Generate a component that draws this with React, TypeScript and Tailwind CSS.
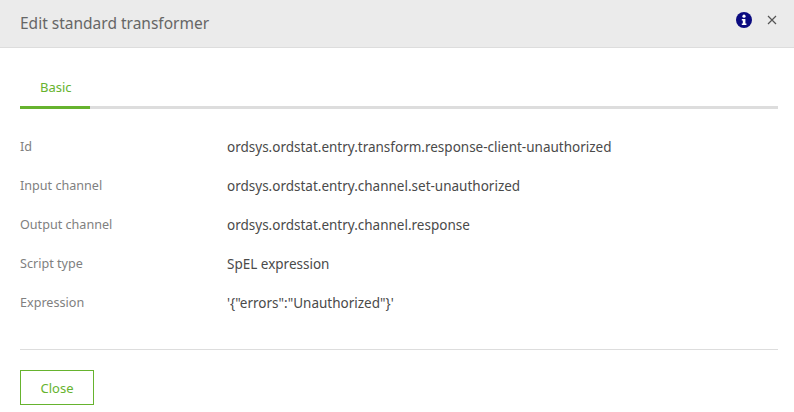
import React from 'react';

const rows = [
  ['Id', 'ordsys.ordstat.entry.transform.response-client-unauthorized'],
  ['Input channel', 'ordsys.ordstat.entry.channel.set-unauthorized'],
  ['Output channel', 'ordsys.ordstat.entry.channel.response'],
  ['Script type', 'SpEL expression'],
  ['Expression', '\'{"errors":"Unauthorized"}\''],
];

export default function App() {
  return (
    <div className="w-[794px] h-[412px] overflow-hidden bg-white font-['Noto_Sans',sans-serif] text-[13px]">
      <div className="flex h-[48px] items-center justify-between border-b border-[#dddddd] bg-[#ebebeb] pl-5 pr-[17px]">
        <h1 className="text-[15.5px] text-[#666666]">Edit standard transformer</h1>
        <div className="mb-[8px] flex items-center gap-[15px]">
          <svg width="16" height="16" viewBox="0 0 16 16">
            <circle cx="8" cy="8" r="8" fill="#0b0b80" />
            <circle cx="8" cy="4.2" r="1.6" fill="#fff" />
            <path d="M5.8 7h3.6v4.4h1v1.6H5.8v-1.6h1V8.6h-1z" fill="#fff" />
          </svg>
          <svg width="10" height="10" viewBox="0 0 10 10" stroke="#555555" strokeWidth="1.2">
            <path d="M1 1l8 8M9 1l-8 8" />
          </svg>
        </div>
      </div>
      <div className="pl-5 pr-4">
        <div className="mt-[30px] flex border-b-[3px] border-[#dddddd]">
          <div className="-mb-[3px] h-[31px] w-[70px] border-b-[3px] border-[#66b32e] pl-[20px] text-[#66b32e]">Basic</div>
        </div>
        <div className="mt-[18px] flex flex-col border-b border-[#dddddd] pb-[27px]">
          {rows.map(([label, value]) => (
            <div key={label} className="flex h-[39px] items-center pt-[2px]">
              <div className="w-[207px] text-[12.6px] text-[#808080]">{label}</div>
              <div className="text-[13.5px] text-[#4a4a4a]">{value}</div>
            </div>
          ))}
        </div>
        <button className="mt-5 h-[35px] w-[74px] border border-[#66b32e] pt-[2px] text-[#66b32e]">Close</button>
      </div>
    </div>
  );
}
